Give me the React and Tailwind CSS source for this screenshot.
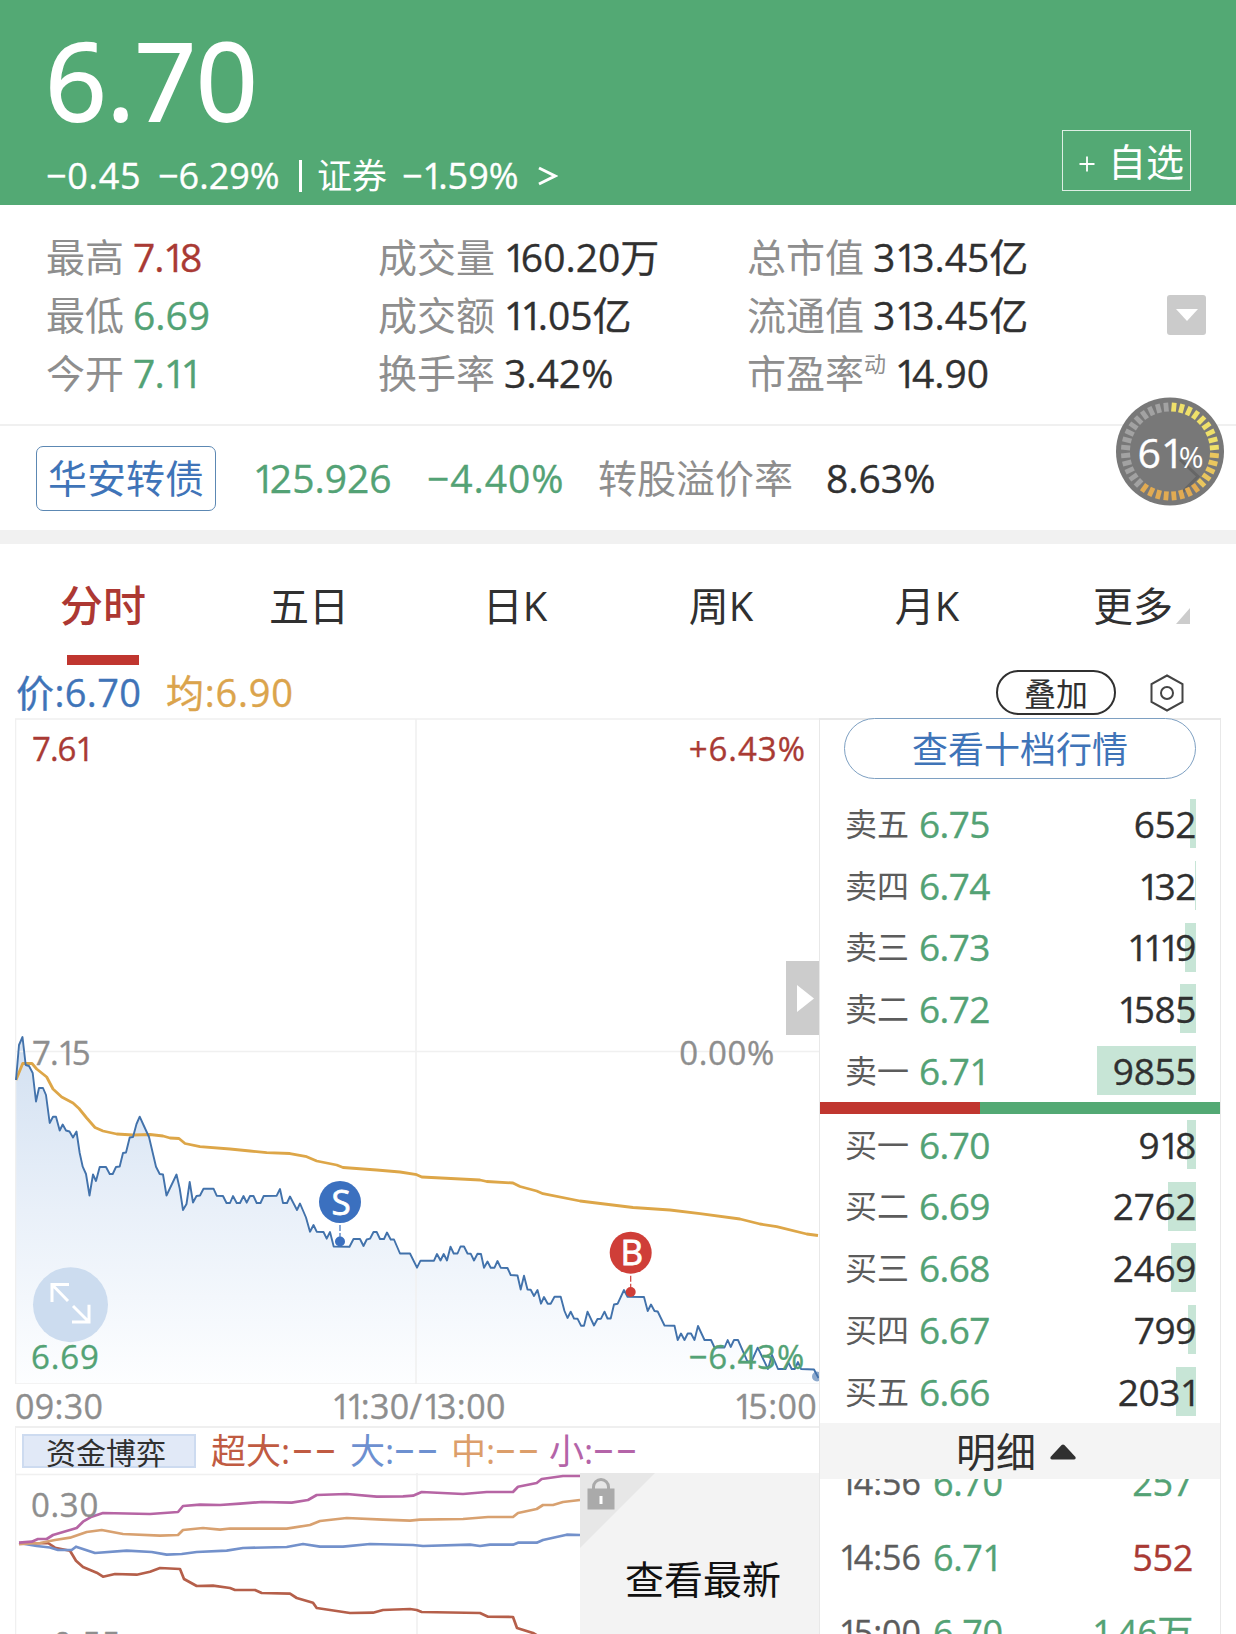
import React from 'react';

const stats = [
    [
        { label: '最高', value: '7.18', color: 'text-[#a93a34] tracking-[-0.03em]' },
        { label: '最低', value: '6.69', color: 'text-[#53a275]' },
        { label: '今开', value: '7.11', color: 'text-[#53a275] tracking-[-0.02em]' }
    ],
    [
        { label: '成交量', value: '160.20万' },
        { label: '成交额', value: '11.05亿' },
        { label: '换手率', value: '3.42%' }
    ],
    [
        { label: '总市值', value: '313.45亿' },
        { label: '流通值', value: '313.45亿' },
        { label: '市盈率', sup: '动', value: '14.90' }
    ]
];

const tabs = ['分时', '五日', '日K', '周K', '月K', '更多'];

const asks = [
    { name: '卖五', price: '6.75', qty: '652', bar: 6 },
    { name: '卖四', price: '6.74', qty: '132', bar: 1 },
    { name: '卖三', price: '6.73', qty: '1119', bar: 11 },
    { name: '卖二', price: '6.72', qty: '1585', bar: 16 },
    { name: '卖一', price: '6.71', qty: '9855', bar: 99 }
];

const bids = [
    { name: '买一', price: '6.70', qty: '918', bar: 9 },
    { name: '买二', price: '6.69', qty: '2762', bar: 28 },
    { name: '买三', price: '6.68', qty: '2469', bar: 25 },
    { name: '买四', price: '6.67', qty: '799', bar: 8 },
    { name: '买五', price: '6.66', qty: '2031', bar: 20 }
];

const trades = [
    { time: '14:56', price: '6.70', qty: '257', color: 'text-[#53a275]' },
    { time: '14:56', price: '6.71', qty: '552', color: 'text-[#a93a34]' },
    { time: '15:00', price: '6.70', qty: '1.46万', color: 'text-[#53a275]' }
];

const pricePoints = '16,1080 19,1045 22.5,1037 25.7,1065 29,1066 32.7,1073 36,1101.5 39,1088 43,1088 46,1095 49.7,1123 53,1116.7 56,1116.7 59.7,1130.5 62.7,1124.5 66,1130.5 69.5,1131.5 73,1137.5 76.5,1131.5 79.7,1153 82.7,1166.7 86,1174 89.5,1195.5 93,1174.5 96,1181 99.7,1167 106,1167 109.7,1174 112.7,1174 116,1167 119.7,1166.5 123,1153 126,1152.5 129.7,1137.5 133,1137 136.5,1124 139.7,1116.7 143.5,1125 149,1137 156,1166.7 159.7,1174 163,1174.5 166.5,1195.5 176.5,1174.5 179.7,1188.5 183,1210 186.5,1204 189.7,1182 193,1202.5 196.5,1196 200,1195.5 203.5,1188.7 213.5,1188.7 216.7,1195.7 223,1196 226.5,1203 230,1203 233,1196 236.7,1203 240,1203 243.5,1196 246.7,1202.7 250,1196 253.5,1196 256.7,1203 260.5,1203 263.7,1196 276.7,1195.7 280,1189 283,1203 287,1203 290,1196.5 297,1210 300,1203.5 306,1217.5 310,1231.7 313.5,1225 316.7,1231.7 323.5,1232 326.7,1238.7 330,1232 333.7,1246.5 349.5,1246.7 353.5,1239 360,1239 363.5,1246 366.7,1239.5 370,1238.7 373.5,1232 376.7,1232 380,1239 384,1239 387,1232.5 390.7,1239.5 394,1239.5 400,1253.5 410,1253.5 417,1267.7 420.5,1260.7 434,1260.7 437,1254 440.5,1260.5 443.7,1254 447,1260.5 450.5,1246.7 453.7,1253.5 457.5,1253.5 460.5,1246.5 464,1246.5 467.5,1253.5 470.7,1253.7 474,1260.5 477.5,1253.7 481,1254 484,1267.7 487.5,1261.5 490.7,1267.7 494.5,1267.7 497.5,1261 500.7,1267.7 507.5,1268 510.7,1275 517.5,1275.5 520.7,1289.5 524,1275.7 527.5,1289.5 530.7,1289.7 534,1296 537.5,1290 541,1303.7 544,1297 547.7,1303.7 550.7,1303.7 554.5,1296.7 560.7,1296.7 564.5,1311 567.5,1318 570.7,1311.7 574,1318.5 577.5,1318.7 581,1325.7 584,1325.7 587.5,1311.7 594,1325.5 597.5,1319 601,1318.7 604.5,1311.7 607.5,1318.5 610.7,1318.5 614,1304.5 617.7,1303.7 624,1290 627.5,1296.7 644,1297 647.7,1311 651,1304.5 654.5,1311 657.7,1311.5 664.5,1325.5 674.5,1325.7 677.7,1340 681,1333.5 684.5,1340 687.7,1333.5 691,1333.5 694.5,1340 698,1326 704.5,1340 711,1340 714.5,1347.5 724.5,1347.5 727.7,1340 730.7,1347 734,1340 738,1340 747.5,1361.7 751.7,1361 757.7,1347.7 768,1369 772,1355 778,1369 785.5,1369 788.5,1362.7 791.7,1369 794.7,1369 798,1362 801,1369 814,1369.5 818.5,1378';

const avgPoints = '16,1080 22.7,1063.5 32,1063.5 36.7,1069 46.7,1077 53,1089 61.7,1097 73,1103 79,1108.5 86.7,1118 95,1127.5 103,1131 116.7,1134 133,1135 150,1134.5 163,1136 170,1138 179,1138.5 185,1143.5 200,1146.7 230,1149 250,1151 266.7,1152.7 290,1153.5 306.7,1156.7 316.7,1161 336.7,1165 343,1167.5 376.7,1170 400,1172 416.7,1174.7 421.7,1177 480,1180 486.7,1181.5 513,1183 520,1186.5 536.7,1191 543,1193.7 580,1201 633,1207.5 670,1210 700,1213.7 740,1219 760,1224 776.7,1226.7 806.7,1234 818,1235.5';

const fundLines = [
    {
        color: '#b55f4a',
        points: '19,1544 48,1543 55,1547.7 70,1550.7 76,1560.7 83,1567 96.7,1572.7 103,1576.7 115,1574 136.7,1574.7 150,1571.7 160,1568 180,1569 184,1579 196.7,1586 213,1585.7 230,1588 235,1590 255,1590 261.7,1593 290,1593.7 296.7,1598 313,1602.7 316.7,1608 350,1613 373,1612.7 383,1610 410,1609 416.7,1610 421.7,1612 480,1613 488,1616.7 513,1617 517,1628 533,1633 545,1640'
    },
    {
        color: '#7391cb',
        points: '19,1543 36.7,1546 50,1547.5 58,1550 71.7,1550 76,1546.7 95,1553 126.7,1550.7 151.7,1552 166.7,1554.7 181.7,1554 196.7,1552 226.7,1550.7 243,1548 286.7,1547 303,1544 320,1546.7 343,1546.7 370,1544 413,1545 423,1546 470,1544.7 480,1546 490,1544.7 513,1544.7 518,1542.7 536.7,1542.7 543,1540 566.7,1534.7 580,1535'
    },
    {
        color: '#d8a170',
        points: '19,1544 40,1543 55,1540 70,1537.7 86.7,1532 101.7,1530 123,1534 160,1535.7 178,1535 183,1530 203,1528 220,1529.7 230,1528.5 260,1528.7 286.7,1528.7 310,1525 320,1521 346.7,1518 383,1519.7 410,1520.7 420,1519.7 463,1519 488,1517 513,1517 518,1513 536.7,1509 543,1505 553,1505 563,1502 580,1500'
    },
    {
        color: '#b665a4',
        points: '19,1542.7 31.7,1541.7 38,1539 46.7,1539 53,1535 76.7,1528 83,1521.7 91.7,1516.7 103,1513 150,1514 178,1512 183,1506 200,1504.7 220,1505 240,1503.7 261.7,1502 291.7,1502.7 308,1500 316.7,1495 346.7,1494 376.7,1496.7 403,1496.3 413,1495.7 421.7,1492 463,1494 486.7,1492 513,1492 518,1486.7 536.7,1483 541.7,1479 563,1476 580,1476'
    }
];

// Digits with a narrow "1", everything else keeps its normal advance
const Num = ({ children, className = '' }) => (
    <span className={`whitespace-pre [-webkit-text-stroke-width:0.35px] ${className}`}>
        {children.split(/(1)/).filter(Boolean).map((part, i) => (
            part === '1' ? <span key={i} className="tracking-[-0.14em]">1</span> : part
        ))}
    </span>
);

const Header = () => (
    <header className="h-[205px] bg-[#53a974] text-white flex justify-between">
        <div className="pl-[45px]">
            <div className="h-[146px] pt-[7px] text-[108px] leading-[146px] tracking-[-0.003em] [-webkit-text-stroke-width:1.8px]">6.70</div>
            <div className="flex items-center h-[60px] text-[36px] leading-[60px]">
                <Num className="w-[113px] pl-[1px] tracking-[0.02em]">−0.45</Num>
                <Num className="w-[141px]">−6.29%</Num>
                <div className="w-[3px] h-[32px] bg-white mr-[15px]" />
                <span className="w-[85px] text-[35px]">证券</span>
                <Num className="w-[136px]">−1.59%</Num>
                <svg className="w-5 h-6" viewBox="0 0 20 24" fill="none" stroke="white" strokeWidth="3">
                    <path d="M1 4 L17 12 L1 20" />
                </svg>
            </div>
        </div>
        <button className="mt-[130px] mr-[45px] w-[129px] h-[61px] border-[1.5px] border-white/80 flex items-center justify-end pr-[6px]">
            <svg className="w-4 h-4 mr-[13px] mt-1.5" viewBox="0 0 16 16" stroke="white" strokeWidth="1.8">
                <path d="M8 0.5 V15.5 M0.5 8 H15.5" />
            </svg>
            <span className="text-[38px] leading-[56px]">自选</span>
        </button>
    </header>
);

const StatColumn = ({ items, className }) => (
    <div className={className}>
        {items.map((s) => (
            <div key={s.label} className="flex h-[58px] items-center text-[39px] leading-[58px]">
                <span className="text-[#8e8e8e]">{s.label}</span>
                {s.sup && <span className="text-[22px] leading-[22px] text-[#8e8e8e] -mt-5">{s.sup}</span>}
                <Num className={`ml-[9px] ${s.color || 'text-[#303030]'}`}>{s.value}</Num>
            </div>
        ))}
    </div>
);

const Stats = () => (
    <section className="relative flex h-[219px] pt-[23px]">
        <StatColumn items={stats[0]} className="ml-[46px] w-[332px]" />
        <StatColumn items={stats[1]} className="w-[369px]" />
        <StatColumn items={stats[2]} className="w-[420px]" />
        <button className="mt-[67px] w-[39px] h-[40px] rounded-[3px] bg-[#cbcbcb] flex items-center justify-center">
            <svg className="w-[22px] h-[12px]" viewBox="0 0 22 12" fill="white">
                <path d="M0 0 H22 L11 12 Z" />
            </svg>
        </button>
    </section>
);

// Round floating gauge that sits over the bond row
const Gauge = () => (
    <div className="absolute left-[1116px] top-[397px] w-[108px] h-[109px]">
        <svg className="absolute inset-0 w-full h-full" viewBox="0 0 108 108">
            <circle cx="54" cy="54" r="54" fill="#787878" />
            <path d="M64 62 L82 79 L64 97" fill="none" stroke="#666666" strokeWidth="3" />
            {Array.from({ length: 36 }, (_, i) => (
                <rect
                    key={i}
                    x="51.6"
                    y="5"
                    width="4.8"
                    height="9"
                    fill={i >= 22 ? '#a2a2a2' : i < 9 ? '#efe06a' : i < 14 ? '#e9c65e' : '#e2ab52'}
                    transform={`rotate(${i * 10 + 5} 54 54)`}
                />
            ))}
        </svg>
        <div className="absolute inset-0 flex items-baseline justify-center pl-[1px] text-white leading-[110px]">
            <Num className="text-[41px]">61</Num>
            <span className="text-[30px]">%</span>
        </div>
    </div>
);

const BondRow = () => (
    <section className="flex items-center h-[106px] border-t-2 border-[#f0f0f0] pl-9 text-[39px] leading-[60px]">
        <div className="w-[180px] h-[65px] border-[1.5px] border-[#5c88b3] rounded-[7px] flex items-center justify-center text-[#3f74b8]">
            华安转债
        </div>
        <Num className="ml-[37px] w-[174px] text-[#53a275]">125.926</Num>
        <Num className="w-[171px] text-[#53a275] tracking-[0.025em]">−4.40%</Num>
        <span className="w-[228px] text-[#8e8e8e]">转股溢价率</span>
        <Num className="text-[#303030]">8.63%</Num>
    </section>
);

const Tabs = () => (
    <nav className="grid grid-cols-6 h-[121px] pt-[2px] text-[40px] leading-[119px] text-[#303030]">
        {tabs.map((tab, i) => (
            <div key={tab} className="relative flex justify-center">
                {i === 0 ? (
                    <>
                        <span className="text-[43px] font-medium text-[#ad3833]">{tab}</span>
                        <div className="absolute bottom-0 w-[72px] h-[10px] bg-[#c0362f]" />
                    </>
                ) : tab}
                {i === 5 && (
                    <svg className="absolute left-[146px] top-[62px] w-[14px] h-[16px]" viewBox="0 0 14 16">
                        <path d="M14 0 V16 H0 Z" fill="#cccccc" />
                    </svg>
                )}
            </div>
        ))}
    </nav>
);

const ChartToolbar = () => (
    <div className="flex items-center h-[53px] pl-4 text-[38px] leading-[54px]">
        <Num className="w-[150px] text-[#3f74b8] tracking-[0.01em]">价:6.70</Num>
        <Num className="text-[#dba44c] tracking-[0.02em]">均:6.90</Num>
        <button className="ml-auto w-[120px] h-[45px] mt-[2px] rounded-full border-2 border-[#303030] text-[32px] leading-[43px] text-[#303030]">叠加</button>
        <svg className="ml-[34px] mr-[52px] mt-[2px] w-[34px] h-[38px]" viewBox="0 0 34 38" fill="none" stroke="#444444" strokeWidth="2">
            <path d="M17 1.5 L32.5 10 V28 L17 36.5 L1.5 28 V10 Z" />
            <circle cx="17" cy="19" r="6" />
        </svg>
    </div>
);

const Marker = ({ x, y, dotY, letter, color }) => (
    <g>
        <line x1={x} y1={y + 23} x2={x} y2={dotY} stroke={color} strokeWidth="1.2" strokeDasharray="6 2" />
        <circle cx={x} cy={y} r="21" fill={color} />
        <circle cx={x} cy={dotY} r="5" fill={color} />
        <text x={x + 1} y={y + 12.5} textAnchor="middle" fontSize="35" fill="white" stroke="white" strokeWidth="0.8">{letter}</text>
    </g>
);

const PriceChart = () => (
    <div className="relative h-[666px] text-[33px] leading-[40px]">
        <svg className="w-[804px] h-[666px]" viewBox="15 718 804 666">
            <defs>
                <linearGradient id="area" x1="0" y1="1037" x2="0" y2="1384" gradientUnits="userSpaceOnUse">
                    <stop offset="0" stopColor="#d2e0f1" />
                    <stop offset="0.5" stopColor="#e9f0f9" />
                    <stop offset="1" stopColor="#fdfeff" />
                </linearGradient>
            </defs>
            <polygon points={`${pricePoints} 818.5,1384 16,1384`} fill="url(#area)" />
            <path d="M15 719 H820 M15.5 719 V1384 M15 1051.5 H820 M416 719 V1384 M15 1384 H820" stroke="#f0f0f0" strokeWidth="1.6" fill="none" />
            <polyline points={avgPoints} fill="none" stroke="#dda648" strokeWidth="2.8" strokeLinejoin="round" />
            <polyline points={pricePoints} fill="none" stroke="#4272ab" strokeWidth="1.9" strokeLinejoin="round" />
            <Marker x={340} y={1202} dotY={1241.5} letter="S" color="#3b70bf" />
            <Marker x={630.7} y={1252.7} dotY={1292} letter="B" color="#cf3e38" />
            <circle cx="817" cy="1376.5" r="5" fill="#4272ab" opacity="0.6" />
            <circle cx="70.5" cy="1304.7" r="37.5" fill="#ccdcef" />
            <path d="M69 1284.5 H52 V1302 M52 1284.5 L68 1301 M72 1322 H89 V1304.7 M89 1322 L73 1306" stroke="white" strokeWidth="3" fill="none" />
            <rect x="786" y="961" width="34" height="74" fill="#cccccc" />
            <path d="M797 985 L814 998.5 L797 1012 Z" fill="white" />
        </svg>
        <Num className="absolute left-[17px] top-[11px] tracking-[-0.03em] text-[#a93a34]">7.61</Num>
        <Num className="absolute right-[13px] top-[11px] tracking-[0.03em] text-[#a93a34]">+6.43%</Num>
        <Num className="absolute left-[17px] top-[315px] tracking-[-0.03em] text-[#8e8e8e]">7.15</Num>
        <Num className="absolute right-[44px] top-[315px] tracking-[0.02em] text-[#8e8e8e]">0.00%</Num>
        <Num className="absolute left-[16px] top-[619px] tracking-[0.025em] text-[#53a275]">6.69</Num>
        <Num className="absolute right-[14px] top-[619px] tracking-[0.025em] text-[#53a275]">−6.43%</Num>
    </div>
);

const FundChart = () => (
    <div className="relative h-[161px] text-[33px] leading-[40px]">
        <svg className="w-[804px] h-[161px]" viewBox="15 1473 804 161">
            <path d="M15 1474.5 H820 M15.5 1473 V1634 M417 1473 V1634" stroke="#f0f0f0" strokeWidth="1.6" fill="none" />
            {fundLines.map((line) => (
                <polyline key={line.color} points={line.points} fill="none" stroke={line.color} strokeWidth="2.7" strokeLinejoin="round" />
            ))}
        </svg>
        <Num className="absolute left-[16px] top-[12px] tracking-[0.02em] text-[#8e8e8e]">0.30</Num>
        <Num className="absolute left-[27px] top-[151px] tracking-[0.02em] text-[#8e8e8e]">-0.55</Num>
        <div className="absolute left-[565px] top-0 w-[239px] h-[161px] bg-[#f3f3f3]">
            <svg className="absolute left-0 top-0 w-[76px] h-[76px]" viewBox="0 0 76 76">
                <path d="M0 0 H75 L0 75 Z" fill="#e7e7e7" />
                <path d="M13.5 17 V14 A7.5 7.5 0 0 1 28.5 14 V17" fill="none" stroke="#aaaaaa" strokeWidth="3" />
                <rect x="7.5" y="15.5" width="27" height="21" fill="#aaaaaa" />
                <rect x="19.5" y="23" width="3" height="8" fill="white" />
            </svg>
            <div className="pl-[45px] pt-[76px] text-[39px] leading-[60px] text-[#111111]">查看最新</div>
        </div>
    </div>
);

const ChartColumn = () => (
    <div className="w-[804px]">
        <PriceChart />
        <div className="flex justify-between items-center h-[42px] pr-[2px] text-[34px] leading-[46px] text-[#8e8e8e]">
            <Num className="pt-[2px] tracking-[0.01em]">09:30</Num>
            <Num className="pt-[2px] tracking-[0.01em]">11:30/13:00</Num>
            <Num className="pt-[2px] tracking-[0.01em]">15:00</Num>
        </div>
        <div className="flex items-center h-[47px] border-t-2 border-l border-[#efefef] pl-[6px] text-[35px] leading-[45px]">
            <div className="w-[174px] h-[34px] mr-[15px] bg-[#e1e9f7] border-2 border-[#cddbf0] text-[30px] leading-[33px] text-[#303030] pl-[22px]">资金博弈</div>
            <span className="w-[139px] text-[#c05b42]">超大:<span className="font-semibold tracking-[3px] ml-[2px]">−−</span></span>
            <span className="w-[101px] text-[#6d90d0]">大:<span className="font-semibold tracking-[3px]">−−</span></span>
            <span className="w-[98px] text-[#dc9e6a]">中:<span className="font-semibold tracking-[3px]">−−</span></span>
            <span className="text-[#b464a8]">小:<span className="font-semibold tracking-[3px]">−−</span></span>
        </div>
        <FundChart />
    </div>
);

const OrderRow = ({ row }) => (
    <div className="relative flex items-center h-[61.75px] pl-[25px] pr-6 text-[37px] leading-[60px]">
        <div className="absolute right-6 top-[6px] h-[49px] bg-[#c7e5d6]" style={{ width: row.bar }} />
        <span className="relative w-[74px] text-[32px] text-[#5c5c5c]">{row.name}</span>
        <Num className="relative text-[#53a275] tracking-[-0.015em]">{row.price}</Num>
        <Num className="relative ml-auto text-[#303030] tracking-[-0.01em]">{row.qty}</Num>
    </div>
);

const OrderBook = () => (
    <div className="w-[402px] h-[916px] border-x border-t-2 border-[#e8e8e8]">
        <button className="block -mt-[2px] ml-[24px] w-[352px] h-[61px] rounded-full border-[1.5px] border-[#7ea0c2] bg-white text-[36px] leading-[61px] text-[#3f74b8]">
            查看十档行情
        </button>
        <div className="pt-[14px]">
            {asks.map((row) => <OrderRow key={row.name} row={row} />)}
        </div>
        <div className="flex h-[12px] bg-[#53a974]">
            <div className="w-[160px] bg-[#c0362f]" />
        </div>
        <div>
            {bids.map((row) => <OrderRow key={row.name} row={row} />)}
        </div>
        <div className="relative flex items-center justify-center h-[56px] bg-[#f4f4f4] text-[40px] leading-[56px] text-[#303030] pr-2 pt-[2px]">
            明细
            <svg className="ml-[14px] w-[26px] h-[16px]" viewBox="0 0 26 16" fill="#303030">
                <path d="M11.6 1 Q13 0 14.4 1 L25.5 13 Q26 15.5 24 15.5 H2 Q0 15.5 0.5 13 Z" />
            </svg>
        </div>
        <div className="h-[156px] overflow-hidden">
            <div className="-mt-[34px]">
                {trades.map((t, i) => (
                    <div key={i} className="flex items-center h-[75px] pl-[19px] pr-[27px] text-[36px] leading-[75px]">
                        <Num className="w-[94px] text-[34px] text-[#5c5c5c]">{t.time}</Num>
                        <Num className="text-[#53a275] tracking-[-0.01em]">{t.price}</Num>
                        <Num className={`ml-auto ${t.color} tracking-[-0.01em]`}>{t.qty}</Num>
                    </div>
                ))}
            </div>
        </div>
    </div>
);

const App = () => {
    return (
        <div className="relative w-[1236px] h-[1634px] overflow-hidden bg-white font-['Open_Sans','Noto_Sans_CJK_SC',sans-serif]">
            <Header />
            <Stats />
            <BondRow />
            <div className="h-[14px] bg-[#f1f1f1]" />
            <Tabs />
            <ChartToolbar />
            <div className="flex pl-[15px]">
                <ChartColumn />
                <OrderBook />
            </div>
            <Gauge />
        </div>
    );
};

export default App;
